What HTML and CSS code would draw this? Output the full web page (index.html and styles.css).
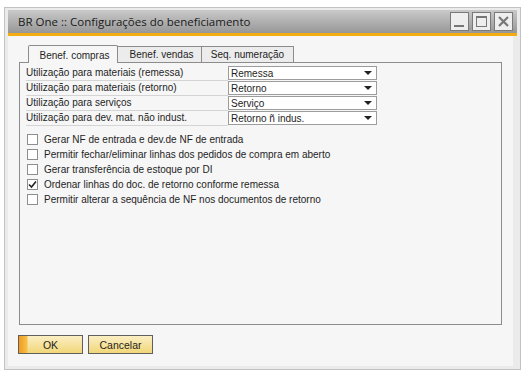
FILE: index.html
```html
<!DOCTYPE html>
<html lang="pt">
<head>
  <meta charset="UTF-8" />
  <title>BR One :: Configurações do beneficiamento</title>
  <link rel="stylesheet" href="styles.css">
</head>
<body>
  <div class="window">
    <div class="titlebar">
      <span class="title">BR One :: Configurações do beneficiamento</span>
      <div class="ctrls">
        <span class="ctrl"><svg width="19" height="19" viewBox="0 0 19 19"><rect x="4" y="13" width="10" height="2" fill="#777"/></svg></span>
        <span class="ctrl"><svg width="19" height="19" viewBox="0 0 19 19"><rect x="4.5" y="4.5" width="10" height="10" fill="none" stroke="#777" stroke-width="1"/><rect x="4.5" y="4.5" width="10" height="1.5" fill="#777"/></svg></span>
        <span class="ctrl"><svg width="19" height="19" viewBox="0 0 19 19"><path d="M5 5 L14 14 M14 5 L5 14" stroke="#777" stroke-width="2.2"/></svg></span>
      </div>
    </div>

    <div class="content">
      <div class="tabs">
        <div class="tab tab-compras active">Benef. compras</div>
        <div class="tab tab-vendas">Benef. vendas</div>
        <div class="tab tab-seq">Seq. numeração</div>
      </div>

      <div class="panel">
        <div class="fields">
          <div class="field"><span class="label">Utilização para materiais (remessa)</span><span class="combo">Remessa</span></div>
          <div class="field"><span class="label">Utilização para materiais (retorno)</span><span class="combo">Retorno</span></div>
          <div class="field"><span class="label">Utilização para serviços</span><span class="combo">Serviço</span></div>
          <div class="field"><span class="label">Utilização para dev. mat. não indust.</span><span class="combo">Retorno ñ indus.</span></div>
        </div>

        <div class="checks">
          <label class="check"><span class="box"></span>Gerar NF de entrada e dev.de NF de entrada</label>
          <label class="check"><span class="box"></span>Permitir fechar/eliminar linhas dos pedidos de compra em aberto</label>
          <label class="check"><span class="box"></span>Gerar transferência de estoque por DI</label>
          <label class="check"><span class="box checked"><svg width="9" height="9" viewBox="0 0 9 9"><path d="M1 4.5 L3.5 7 L8 1.5" fill="none" stroke="#222" stroke-width="1.6"/></svg></span>Ordenar linhas do doc. de retorno conforme remessa</label>
          <label class="check"><span class="box"></span>Permitir alterar a sequência de NF nos documentos de retorno</label>
        </div>
      </div>

      <div class="actions">
        <button type="button" class="btn btn-ok">OK</button>
        <button type="button" class="btn">Cancelar</button>
      </div>
    </div>
  </div>
</body>
</html>
```

FILE: styles.css
```css
:root {
  --frame: #ebebeb;
  --body: #f6f6f6;
  --line: #8c8c8c;
  --text: #1e1e1e;
}

body {
  margin: 0;
  background: #fff;
  font-family: "Liberation Sans", Arial, sans-serif;
  font-size: 10px;
  color: var(--text);
}

.window {
  margin: 7px 0 0 4px;
  width: 509px;
  height: 356px;
  border: 1px solid #c2c2c2;
  background: var(--frame);
  padding: 2px 3px 3px 3px;
  display: flex;
  flex-direction: column;
}

.titlebar {
  height: 23px;
  border-bottom: 3px solid #f3ad13;
  background: linear-gradient(#c9c9c9, #979797);
  display: flex;
  align-items: center;
  justify-content: space-between;
  padding: 0 4px 0 10px;
}

.title {
  font-family: "Open Sans", sans-serif;
  font-size: 11.5px;
  color: #1a1a1a;
}

.ctrls {
  display: flex;
  gap: 3px;
}

.ctrl {
  width: 19px;
  height: 19px;
  background: #eeeeee;
  border: 1px solid #7a7a7a;
  box-sizing: border-box;
  display: flex;
}

.ctrl svg {
  margin: -1px;
}

.content {
  flex: 1;
  background: var(--body);
  border-right: 4px solid var(--frame);
  padding: 8px 0 0 11px;
  display: flex;
  flex-direction: column;
}

.tabs {
  display: flex;
  padding-left: 9px;
  align-items: flex-end;
  height: 18px;
}

.tab {
  box-sizing: border-box;
  height: 16px;
  line-height: 16px;
  text-align: center;
  border: 1px solid var(--line);
  border-bottom: none;
  background: #ececec;
  margin-right: -1px;
}

.tab-compras { width: 90px; padding-left: 3px; }
.tab-vendas { width: 85px; padding-left: 4px; }
.tab-seq { width: 93px; }

.tab.active {
  height: 18px;
  line-height: 20px;
  background: var(--body);
  border-radius: 2px 2px 0 0;
  position: relative;
  z-index: 1;
  margin-bottom: -1px;
}

.panel {
  width: 483px;
  height: 263px;
  border: 1px solid var(--line);
  padding: 3px 6px;
  box-sizing: border-box;
}

.fields {
  display: flex;
  flex-direction: column;
  gap: 1px;
}

.field {
  display: flex;
  height: 14px;
  align-items: center;
}

.label {
  width: 202px;
  height: 14px;
  line-height: 14px;
  border-bottom: 1px solid #d4d4d4;
}

.combo {
  width: 149px;
  height: 14px;
  line-height: 13px;
  box-sizing: border-box;
  border: 1px solid #9c9c9c;
  background: #fff;
  padding-left: 2px;
  position: relative;
}

.combo::after {
  content: "";
  position: absolute;
  right: 4px;
  top: 4px;
  border-left: 4px solid transparent;
  border-right: 4px solid transparent;
  border-top: 4px solid #222;
}

.checks {
  margin-top: 9px;
  display: flex;
  flex-direction: column;
  gap: 4px;
}

.check {
  display: flex;
  align-items: center;
  gap: 6px;
  height: 11px;
  padding-left: 1px;
}

.box {
  width: 11px;
  height: 11px;
  box-sizing: border-box;
  border: 1px solid #8e8e8e;
  background: #fff;
  display: flex;
  align-items: center;
  justify-content: center;
}

.actions {
  display: flex;
  gap: 5px;
  margin-top: 10px;
  margin-left: -1px;
}

.btn {
  width: 65px;
  height: 19px;
  border: 1px solid #5f5f5f;
  background: linear-gradient(#fbefc4, #f1d678);
  font-family: "Liberation Sans", Arial, sans-serif;
  font-size: 10.5px;
  color: #1e1e1e;
  padding: 0;
}

.btn-ok {
  background: linear-gradient(90deg, #f39a1e 0, #f6c04a 8px, transparent 9px), linear-gradient(#fbefc4, #f1d678);
}
```
